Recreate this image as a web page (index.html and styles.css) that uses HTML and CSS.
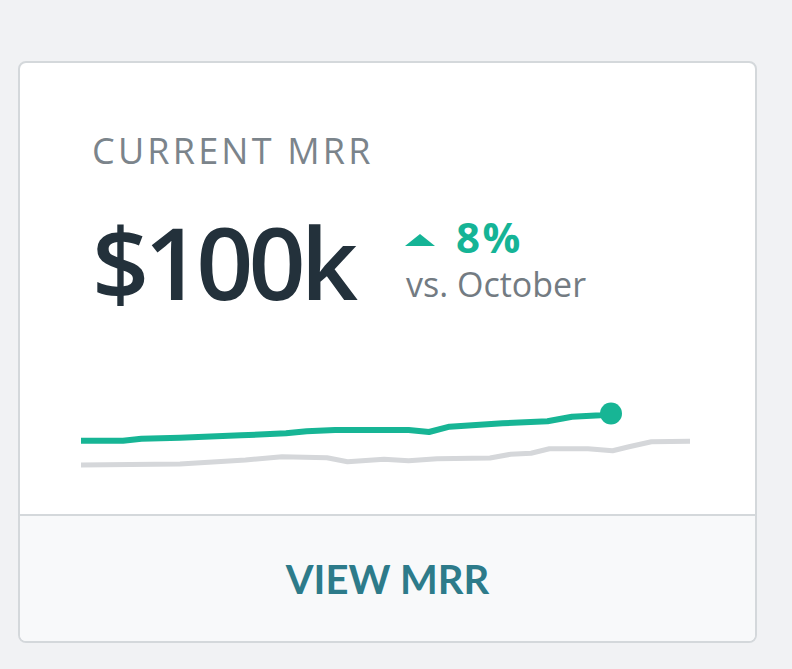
FILE: index.html
```html
<!DOCTYPE html>
<html lang="en">
<head>
<meta charset="utf-8">
<title>Current MRR</title>
<link rel="stylesheet" href="styles.css">
</head>
<body>
<div class="page">
  <section class="card">
    <div class="card-body">
      <h2 class="title">CURRENT MRR</h2>
      <div class="metric">
        <span class="value">$100k</span>
        <div class="change">
          <div class="change-top">
            <svg class="arrow" width="30" height="12" viewBox="0 0 30 12"><polygon points="0,12 30,12 15,0" fill="#15b496"/></svg>
            <span class="pct">8%</span>
          </div>
          <span class="compare">vs. October</span>
        </div>
      </div>
      <svg class="chart" width="735" height="80" viewBox="0 0 735 80">
        <polyline fill="none" stroke="#d5d7da" stroke-width="5" stroke-linejoin="round" points="61,65 160,64 225.5,60 262,56.7 307,57.7 327.5,61.7 364,59.3 388.6,60.7 417,58.7 470,58 490.6,54.3 511,53.3 529.4,48.7 568,48.7 592.6,50.7 609,46.7 631.4,41.7 670,41.3"/>
        <polyline fill="none" stroke="#17b595" stroke-width="6" stroke-linejoin="round" points="61,40.7 103,40.7 121.4,38.7 160,37.7 221,35.3 266,33.3 286.7,31.3 315,30 388.7,30 409,32 429.5,26.7 482.6,23.3 527.5,21.3 552,16.7 580.6,15.3 591,14"/>
        <circle cx="591" cy="13.5" r="11" fill="#17b595"/>
      </svg>
    </div>
    <a class="card-footer" href="#">VIEW MRR</a>
  </section>
</div>
</body>
</html>
```

FILE: styles.css
```css
html, body {
  margin: 0;
  padding: 0;
  background: #f1f2f4;
}

.page {
  padding: 61px 0 0 18px;
}

.card {
  width: 739px;
  box-sizing: border-box;
  background: #ffffff;
  border: 2px solid #d4d8db;
  border-radius: 8px;
  overflow: hidden;
  display: flex;
  flex-direction: column;
}

.card-body {
  display: flex;
  flex-direction: column;
  padding: 67px 0 34px 72px;
}

.title {
  margin: 0;
  font-family: "Open Sans", "Noto Sans", sans-serif;
  font-weight: 500;
  font-size: 36px;
  line-height: 42px;
  letter-spacing: 3.2px;
  color: #7b848b;
}

.metric {
  display: flex;
  align-items: flex-start;
  margin-top: 39px;
  height: 100px;
}

.value {
  font-family: "Open Sans", "Noto Sans", sans-serif;
  font-weight: 600;
  font-size: 100px;
  line-height: 100px;
  letter-spacing: -5px;
  color: #23313b;
}

.change {
  display: flex;
  flex-direction: column;
  margin-left: 53px;
  margin-top: 6px;
}

.change-top {
  display: flex;
  align-items: center;
  gap: 21px;
  height: 40px;
}

.arrow {
  display: block;
  margin-left: -1px;
  margin-top: 6px;
}

.pct {
  font-family: "Open Sans", "Noto Sans", sans-serif;
  font-weight: 700;
  font-size: 42px;
  line-height: 40px;
  letter-spacing: 2.5px;
  color: #15b496;
}

.compare {
  font-family: "Open Sans", "Noto Sans", sans-serif;
  font-weight: 400;
  font-size: 34px;
  line-height: 40px;
  color: #737b82;
  margin-left: 0;
  margin-top: 7px;
}

.chart {
  display: block;
  margin: 89px 0 0 -72px;
}

.card-footer {
  display: flex;
  align-items: center;
  justify-content: center;
  height: 125px;
  background: #f8f9fa;
  border-top: 2px solid #d4d8db;
  font-family: "Lato", "Open Sans", sans-serif;
  font-weight: 700;
  font-size: 40px;
  letter-spacing: 0;
  color: #2d7b8a;
  text-decoration: none;
}
```
